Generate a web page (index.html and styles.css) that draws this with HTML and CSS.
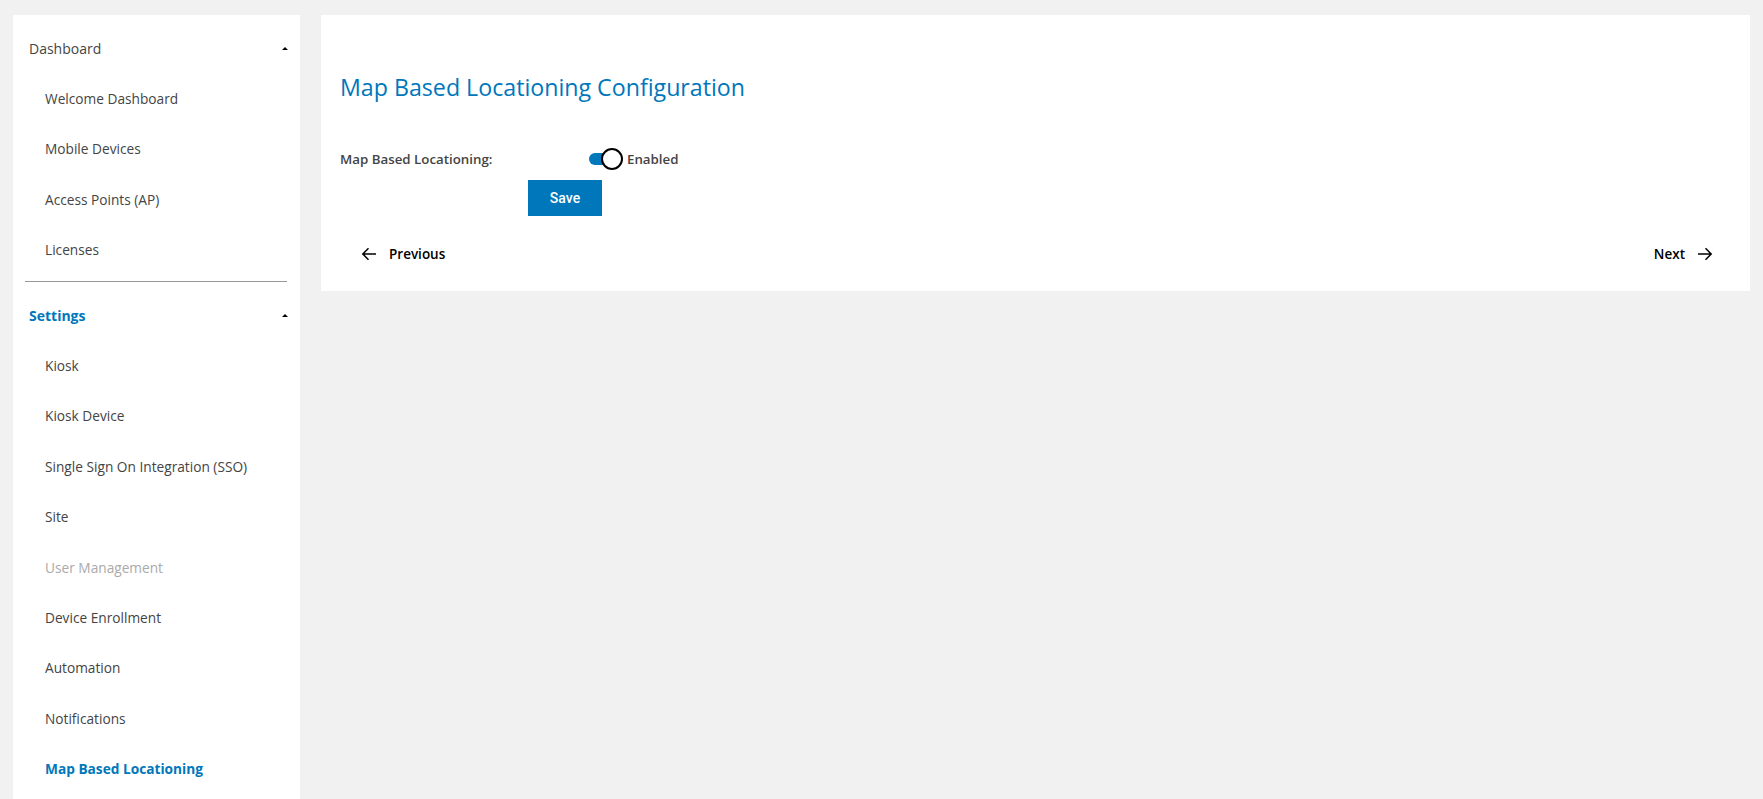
FILE: index.html
```html
<!DOCTYPE html>
<html lang="en">
<head>
  <meta charset="UTF-8" />
  <meta name="viewport" content="width=device-width, initial-scale=1.0"/>
  <title>Map Based Locationing Configuration</title>
  <link rel="stylesheet" href="styles.css">
</head>
<body>
  <div class="layout">
    <nav class="sidebar">
      <div class="nav-group">
        <div class="nav-header">
          <span>Dashboard</span>
          <span class="caret"></span>
        </div>
        <a class="nav-item">Welcome Dashboard</a>
        <a class="nav-item">Mobile Devices</a>
        <a class="nav-item">Access Points (AP)</a>
        <a class="nav-item">Licenses</a>
      </div>

      <hr class="divider">

      <div class="nav-group">
        <div class="nav-header active">
          <span>Settings</span>
          <span class="caret"></span>
        </div>
        <a class="nav-item">Kiosk</a>
        <a class="nav-item">Kiosk Device</a>
        <a class="nav-item">Single Sign On Integration (SSO)</a>
        <a class="nav-item">Site</a>
        <a class="nav-item disabled">User Management</a>
        <a class="nav-item">Device Enrollment</a>
        <a class="nav-item">Automation</a>
        <a class="nav-item">Notifications</a>
        <a class="nav-item active">Map Based Locationing</a>
      </div>
    </nav>

    <main class="panel">
      <h1>Map Based Locationing Configuration</h1>

      <div class="field">
        <label class="field-label">Map Based Locationing:</label>
        <div class="switch">
          <span class="track"><span class="knob"></span></span>
          <span class="switch-text">Enabled</span>
        </div>
      </div>

      <button class="btn-save">Save</button>

      <div class="pager">
        <a class="pager-link">
          <svg width="16" height="16" viewBox="0 0 16 16"><path d="M15 8H1.8M7.5 2.3L1.8 8l5.7 5.7" fill="none" stroke="#000" stroke-width="1.5"/></svg>
          <span>Previous</span>
        </a>
        <a class="pager-link">
          <span>Next</span>
          <svg width="16" height="16" viewBox="0 0 16 16"><path d="M1 8h13.2M8.5 2.3L14.2 8l-5.7 5.7" fill="none" stroke="#000" stroke-width="1.5"/></svg>
        </a>
      </div>
    </main>
  </div>
</body>
</html>
```

FILE: styles.css
```css
body {
  margin: 0;
  background: #f1f1f1;
  font-family: 'Open Sans', 'Noto Sans', sans-serif;
  color: #444;
}

.layout {
  display: flex;
  align-items: flex-start;
  gap: 21px;
  padding: 15px 13px 0;
}

.sidebar {
  width: 287px;
  flex-shrink: 0;
  background: white;
  padding-top: 8px;
  min-height: 800px;
  box-sizing: border-box;
}

.nav-header,
.nav-item {
  display: flex;
  align-items: center;
  height: 50.4px;
  font-size: 14px;
}

.nav-header {
  justify-content: space-between;
  padding: 0 12px 0 16px;
  color: #444;
}

.nav-header.active {
  color: #0077bb;
  font-weight: 700;
}

.caret {
  width: 0;
  height: 0;
  border-left: 3px solid transparent;
  border-right: 3px solid transparent;
  border-bottom: 3px solid #000;
}

.nav-item {
  padding-left: 32px;
  color: #444;
  font-size: 13.7px;
}

.nav-item.disabled {
  color: #aaa;
}

.nav-item.active {
  color: #0077bb;
  font-weight: 700;
}

.divider {
  border: none;
  border-top: 1px solid #999;
  margin: 6px 13px 8px 12px;
}

.panel {
  flex: 1;
  background: white;
  padding: 56px 19px 25px;
}

.panel h1 {
  margin: 0;
  font-size: 23.2px;
  line-height: 32px;
  font-weight: 400;
  color: #0077bb;
}

.field {
  display: flex;
  align-items: center;
  height: 24px;
  margin-top: 44px;
}

.field-label {
  width: 249px;
  font-size: 13.3px;
  font-weight: 600;
  color: #444;
}

.switch {
  display: flex;
  align-items: center;
  gap: 6px;
}

.track {
  position: relative;
  display: block;
  width: 28px;
  height: 12px;
  border-radius: 6px;
  background: #0077bb;
}

.knob {
  position: absolute;
  right: -6px;
  top: -5px;
  width: 18px;
  height: 18px;
  border-radius: 50%;
  background: white;
  border: 2px solid #000;
}

.switch-text {
  margin-left: 4px;
  font-size: 13.3px;
  font-weight: 600;
  color: #444;
}

.btn-save {
  display: block;
  margin: 9px 0 0 188px;
  width: 74px;
  height: 36px;
  border: none;
  background: #0077bb;
  color: white;
  font-family: 'Roboto', sans-serif;
  font-size: 14px;
  font-weight: 500;
}

.pager {
  display: flex;
  justify-content: space-between;
  align-items: center;
  height: 24px;
  margin-top: 26px;
  padding: 0 18px 0 21px;
}

.pager-link {
  display: flex;
  align-items: center;
  gap: 12px;
  font-size: 13.5px;
  font-weight: 600;
  color: #000;
}
```
